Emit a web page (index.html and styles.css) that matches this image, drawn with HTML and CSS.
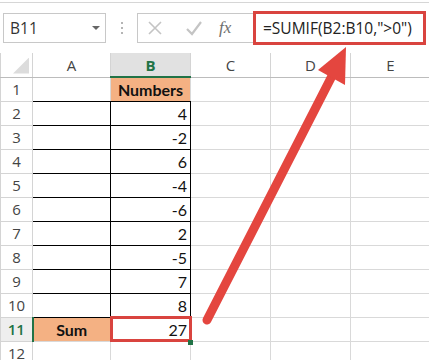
FILE: index.html
```html
<!DOCTYPE html>
<html lang="en">
<head>
    <meta charset="UTF-8">
    <meta name="viewport" content="width=device-width, initial-scale=1.0">
    <title>SUMIF example</title>
    <link rel="stylesheet" href="styles.css">
</head>
<body>
    <div id="sheet">
        <!-- Formula Bar -->
        <div class="formula-bar">
            <div class="name-box">
                <span>B11</span>
                <span class="caret"></span>
            </div>
            <div class="grip"><i></i><i></i><i></i></div>
            <div class="fx-buttons">
                <svg class="fx-icon" width="16" height="16" viewBox="0 0 16 16">
                    <path d="M2 2 L14 14 M14 2 L2 14" stroke="#c4c4c4" stroke-width="1.6" fill="none"/>
                </svg>
                <svg class="fx-icon" width="18" height="16" viewBox="0 0 18 16">
                    <path d="M2 9 L7 14 L16 2" stroke="#c4c4c4" stroke-width="2.2" fill="none"/>
                </svg>
                <span class="fx">fx</span>
            </div>
            <div class="formula">=SUMIF(B2:B10,"&gt;0")</div>
        </div>

        <!-- Grid -->
        <table class="grid">
            <colgroup>
                <col class="col-head">
                <col class="col-a">
                <col class="col-b">
                <col class="col-c">
                <col class="col-d">
                <col class="col-e">
            </colgroup>
            <tr class="head-row">
                <th class="corner"></th>
                <th>A</th>
                <th class="selected">B</th>
                <th>C</th>
                <th>D</th>
                <th>E</th>
            </tr>
            <tr>
                <th>1</th>
                <td class="boxed-bottom"></td>
                <td class="title boxed-bottom">Numbers</td>
                <td></td><td></td><td></td>
            </tr>
            <tr><th>2</th><td class="boxed"></td><td class="boxed num">4</td><td></td><td></td><td></td></tr>
            <tr><th>3</th><td class="boxed"></td><td class="boxed num">-2</td><td></td><td></td><td></td></tr>
            <tr><th>4</th><td class="boxed"></td><td class="boxed num">6</td><td></td><td></td><td></td></tr>
            <tr><th>5</th><td class="boxed"></td><td class="boxed num">-4</td><td></td><td></td><td></td></tr>
            <tr><th>6</th><td class="boxed"></td><td class="boxed num">-6</td><td></td><td></td><td></td></tr>
            <tr><th>7</th><td class="boxed"></td><td class="boxed num">2</td><td></td><td></td><td></td></tr>
            <tr><th>8</th><td class="boxed"></td><td class="boxed num">-5</td><td></td><td></td><td></td></tr>
            <tr><th>9</th><td class="boxed"></td><td class="boxed num">7</td><td></td><td></td><td></td></tr>
            <tr><th>10</th><td class="boxed"></td><td class="boxed num">8</td><td></td><td></td><td></td></tr>
            <tr>
                <th class="selected-row">11</th>
                <td class="title sum">Sum</td>
                <td class="num active">27<span class="handle"></span></td>
                <td></td><td></td><td></td>
            </tr>
            <tr><th>12</th><td></td><td></td><td></td><td></td><td></td></tr>
        </table>

        <!-- Callout arrow -->
        <svg class="arrow" width="429" height="360" viewBox="0 0 429 360">
            <line x1="207" y1="320" x2="333" y2="74" stroke="#e4463f" stroke-width="9" stroke-linecap="round"/>
            <polygon points="346,47 318,70 345,85" fill="#e4463f"/>
        </svg>
    </div>
</body>
</html>
```

FILE: styles.css
```css
/* Page */
body {
    margin: 0;
    background-color: #ffffff;
    overflow: hidden;
}

#sheet {
    position: relative;
    width: 429px;
    height: 360px;
    overflow: hidden;
    font-family: "Open Sans", "Liberation Sans", sans-serif;
}

/* Formula Bar */
.formula-bar {
    display: flex;
    align-items: center;
    height: 50px;
    border-top: 1px solid #d6d6d6;
    margin-top: 2px;
    padding-left: 3px;
}

.name-box {
    display: flex;
    align-items: center;
    justify-content: space-between;
    width: 90px;
    height: 28px;
    padding: 0 5px 0 6px;
    border: 1px solid #c8c8c8;
    font-size: 15.5px;
    color: #333;
}

.caret {
    width: 0;
    height: 0;
    border-left: 4px solid transparent;
    border-right: 4px solid transparent;
    border-top: 4px solid #666;
}

.grip {
    display: flex;
    flex-direction: column;
    gap: 3px;
    margin: 0 14px 0 15px;
}

.grip i {
    display: block;
    width: 2px;
    height: 2px;
    background-color: #b5b5b5;
}

.fx-buttons {
    display: flex;
    align-items: center;
    width: 106px;
    height: 28px;
    border: 1px solid #c8c8c8;
    border-right: none;
    padding-left: 9px;
    gap: 22px;
}

.fx {
    font-family: "Liberation Serif", serif;
    font-style: italic;
    font-size: 17px;
    color: #6e6e6e;
    margin-left: -6px;
}

.formula {
    flex: 1;
    height: 28px;
    margin-right: 3px;
    border: 3px solid #d9443f;
    padding-left: 7px;
    font-size: 15.5px;
    line-height: 28px;
    color: #222;
    white-space: nowrap;
}

/* Grid */
.grid {
    border-collapse: collapse;
    table-layout: fixed;
    width: 430px;
    font-family: "Lato", "Liberation Sans", sans-serif;
    font-size: 16px;
    color: #111;
}

.col-head { width: 32px; }
.col-a { width: 78px; }
.col-b { width: 80px; }
.col-c { width: 80px; }
.col-d { width: 80px; }
.col-e { width: 80px; }

.grid tr {
    height: 24px;
}

.grid td {
    border: 1px solid #d9d9d9;
    padding: 0 3px;
}

.grid th {
    border: 1px solid #d4d4d4;
    font-family: "Open Sans", "Liberation Sans", sans-serif;
    font-weight: normal;
    font-size: 15px;
    color: #444;
    padding: 0;
}

.head-row {
    height: 23px;
}

.head-row th {
    border-top: none;
    border-bottom-color: #bcbcbc;
}

.corner {
    position: relative;
}

.corner::after {
    content: "";
    position: absolute;
    right: 3px;
    bottom: 3px;
    width: 16px;
    height: 16px;
    background-color: #dcdcdc;
    clip-path: polygon(100% 0, 100% 100%, 0 100%);
}

.head-row .selected {
    background-color: #e1e1e1;
    color: #217346;
    font-weight: bold;
    border-bottom: 2px solid #217346;
}

.grid .selected-row {
    background-color: #eeeeee;
    color: #217346;
    font-weight: 600;
    border-right: 2px solid #217346;
}

/* Data cells */
.grid .boxed {
    border: 1px solid #000;
}

.grid .boxed-bottom {
    border-bottom: 1px solid #000;
}

.num {
    text-align: right;
}

.title {
    background-color: #f4b183;
    font-weight: bold;
    text-align: center;
}

.grid .sum {
    border-top: 1px solid #000;
}

.grid .active {
    position: relative;
    border: 1px solid #217346;
    outline: 3px solid #d9443f;
    outline-offset: -2px;
}

.handle {
    position: absolute;
    right: -3px;
    bottom: -4px;
    width: 5px;
    height: 5px;
    background-color: #217346;
}

/* Arrow overlay */
.arrow {
    position: absolute;
    top: 0;
    left: 0;
    pointer-events: none;
}
```
